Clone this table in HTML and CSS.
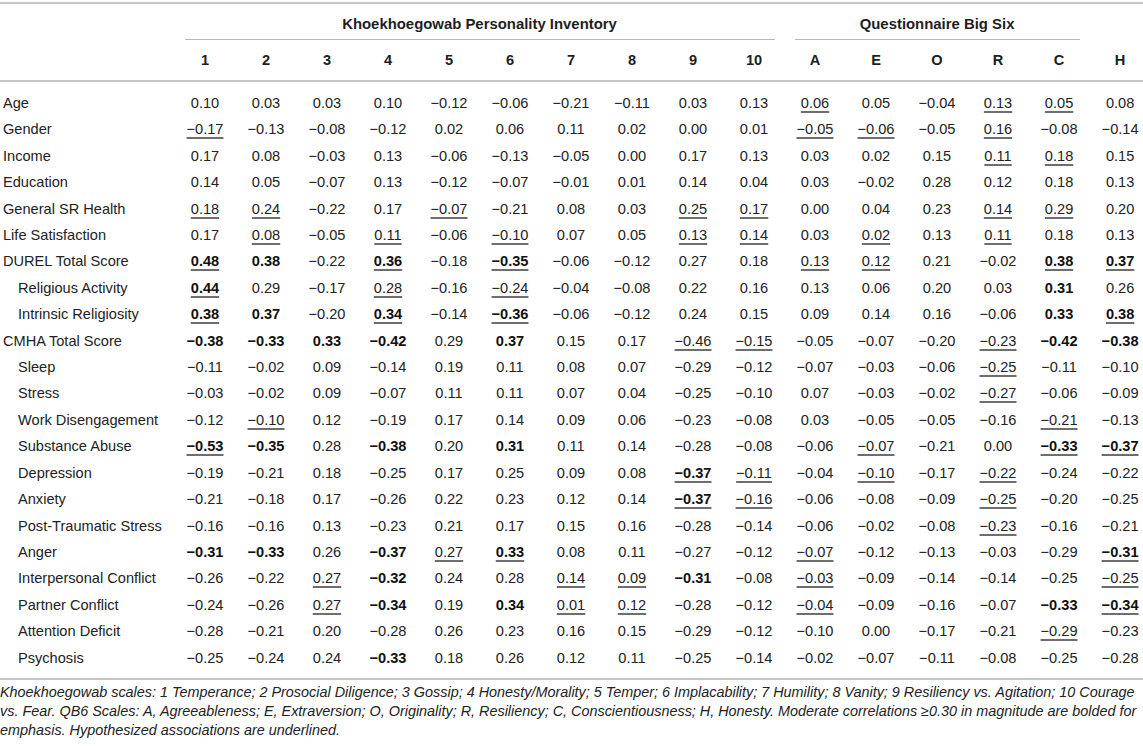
FILE: index.html
```html
<!DOCTYPE html>
<html lang="en">
<head>
<meta charset="utf-8">
<title>Correlations table</title>
<link rel="stylesheet" href="styles.css">
</head>
<body>
<div class="wrap">
<table class="corr">
<colgroup>
<col class="c-label">
<col class="c-num"><col class="c-num"><col class="c-num"><col class="c-num"><col class="c-num">
<col class="c-num"><col class="c-num"><col class="c-num"><col class="c-num"><col class="c-num">
<col class="c-num"><col class="c-num"><col class="c-num"><col class="c-num"><col class="c-num">
<col class="c-num">
</colgroup>
<thead>
<tr class="group-row">
<th></th>
<th colspan="10"><div class="grule">Khoekhoegowab Personality Inventory</div></th>
<th colspan="5"><div class="grule">Questionnaire Big Six</div></th>
<th></th>
</tr>
<tr class="col-row">
<th></th>
<th>1</th><th>2</th><th>3</th><th>4</th><th>5</th><th>6</th><th>7</th><th>8</th><th>9</th><th>10</th>
<th>A</th><th>E</th><th>O</th><th>R</th><th>C</th><th>H</th>
</tr>
</thead>
<tbody>
<tr><td class="lbl">Age</td><td>0.10</td><td>0.03</td><td>0.03</td><td>0.10</td><td>−0.12</td><td>−0.06</td><td>−0.21</td><td>−0.11</td><td>0.03</td><td>0.13</td><td class="u">0.06</td><td>0.05</td><td>−0.04</td><td class="u">0.13</td><td class="u">0.05</td><td>0.08</td></tr>
<tr><td class="lbl">Gender</td><td class="u">−0.17</td><td>−0.13</td><td>−0.08</td><td>−0.12</td><td>0.02</td><td>0.06</td><td>0.11</td><td>0.02</td><td>0.00</td><td>0.01</td><td class="u">−0.05</td><td class="u">−0.06</td><td>−0.05</td><td class="u">0.16</td><td>−0.08</td><td>−0.14</td></tr>
<tr><td class="lbl">Income</td><td>0.17</td><td>0.08</td><td>−0.03</td><td>0.13</td><td>−0.06</td><td>−0.13</td><td>−0.05</td><td>0.00</td><td>0.17</td><td>0.13</td><td>0.03</td><td>0.02</td><td>0.15</td><td class="u">0.11</td><td class="u">0.18</td><td>0.15</td></tr>
<tr><td class="lbl">Education</td><td>0.14</td><td>0.05</td><td>−0.07</td><td>0.13</td><td>−0.12</td><td>−0.07</td><td>−0.01</td><td>0.01</td><td>0.14</td><td>0.04</td><td>0.03</td><td>−0.02</td><td>0.28</td><td>0.12</td><td>0.18</td><td>0.13</td></tr>
<tr><td class="lbl">General SR Health</td><td class="u">0.18</td><td class="u">0.24</td><td>−0.22</td><td>0.17</td><td class="u">−0.07</td><td>−0.21</td><td>0.08</td><td>0.03</td><td class="u">0.25</td><td class="u">0.17</td><td>0.00</td><td>0.04</td><td>0.23</td><td class="u">0.14</td><td class="u">0.29</td><td>0.20</td></tr>
<tr><td class="lbl">Life Satisfaction</td><td>0.17</td><td class="u">0.08</td><td>−0.05</td><td class="u">0.11</td><td>−0.06</td><td class="u">−0.10</td><td>0.07</td><td>0.05</td><td class="u">0.13</td><td class="u">0.14</td><td>0.03</td><td class="u">0.02</td><td>0.13</td><td class="u">0.11</td><td>0.18</td><td>0.13</td></tr>
<tr><td class="lbl">DUREL Total Score</td><td class="b u">0.48</td><td class="b">0.38</td><td>−0.22</td><td class="b u">0.36</td><td>−0.18</td><td class="b u">−0.35</td><td>−0.06</td><td>−0.12</td><td>0.27</td><td>0.18</td><td class="u">0.13</td><td class="u">0.12</td><td>0.21</td><td>−0.02</td><td class="b u">0.38</td><td class="b u">0.37</td></tr>
<tr><td class="lbl ind">Religious Activity</td><td class="b u">0.44</td><td>0.29</td><td>−0.17</td><td class="u">0.28</td><td>−0.16</td><td class="u">−0.24</td><td>−0.04</td><td>−0.08</td><td>0.22</td><td>0.16</td><td>0.13</td><td>0.06</td><td>0.20</td><td>0.03</td><td class="b">0.31</td><td>0.26</td></tr>
<tr><td class="lbl ind">Intrinsic Religiosity</td><td class="b u">0.38</td><td class="b">0.37</td><td>−0.20</td><td class="b u">0.34</td><td>−0.14</td><td class="b u">−0.36</td><td>−0.06</td><td>−0.12</td><td>0.24</td><td>0.15</td><td>0.09</td><td>0.14</td><td>0.16</td><td>−0.06</td><td class="b">0.33</td><td class="b u">0.38</td></tr>
<tr><td class="lbl">CMHA Total Score</td><td class="b">−0.38</td><td class="b">−0.33</td><td class="b">0.33</td><td class="b">−0.42</td><td>0.29</td><td class="b">0.37</td><td>0.15</td><td>0.17</td><td class="u">−0.46</td><td class="u">−0.15</td><td>−0.05</td><td>−0.07</td><td>−0.20</td><td class="u">−0.23</td><td class="b">−0.42</td><td class="b">−0.38</td></tr>
<tr><td class="lbl ind">Sleep</td><td>−0.11</td><td>−0.02</td><td>0.09</td><td>−0.14</td><td>0.19</td><td>0.11</td><td>0.08</td><td>0.07</td><td>−0.29</td><td>−0.12</td><td>−0.07</td><td>−0.03</td><td>−0.06</td><td class="u">−0.25</td><td>−0.11</td><td>−0.10</td></tr>
<tr><td class="lbl ind">Stress</td><td>−0.03</td><td>−0.02</td><td>0.09</td><td>−0.07</td><td>0.11</td><td>0.11</td><td>0.07</td><td>0.04</td><td>−0.25</td><td>−0.10</td><td>0.07</td><td>−0.03</td><td>−0.02</td><td class="u">−0.27</td><td>−0.06</td><td>−0.09</td></tr>
<tr><td class="lbl ind">Work Disengagement</td><td>−0.12</td><td class="u">−0.10</td><td>0.12</td><td>−0.19</td><td>0.17</td><td>0.14</td><td>0.09</td><td>0.06</td><td>−0.23</td><td>−0.08</td><td>0.03</td><td>−0.05</td><td>−0.05</td><td>−0.16</td><td class="u">−0.21</td><td>−0.13</td></tr>
<tr><td class="lbl ind">Substance Abuse</td><td class="b u">−0.53</td><td class="b">−0.35</td><td>0.28</td><td class="b">−0.38</td><td>0.20</td><td class="b">0.31</td><td>0.11</td><td>0.14</td><td>−0.28</td><td>−0.08</td><td>−0.06</td><td class="u">−0.07</td><td>−0.21</td><td>0.00</td><td class="b u">−0.33</td><td class="b u">−0.37</td></tr>
<tr><td class="lbl ind">Depression</td><td>−0.19</td><td>−0.21</td><td>0.18</td><td>−0.25</td><td>0.17</td><td>0.25</td><td>0.09</td><td>0.08</td><td class="b u">−0.37</td><td class="u">−0.11</td><td>−0.04</td><td class="u">−0.10</td><td>−0.17</td><td class="u">−0.22</td><td>−0.24</td><td>−0.22</td></tr>
<tr><td class="lbl ind">Anxiety</td><td>−0.21</td><td>−0.18</td><td>0.17</td><td>−0.26</td><td>0.22</td><td>0.23</td><td>0.12</td><td>0.14</td><td class="b u">−0.37</td><td class="u">−0.16</td><td>−0.06</td><td>−0.08</td><td>−0.09</td><td class="u">−0.25</td><td>−0.20</td><td>−0.25</td></tr>
<tr><td class="lbl ind">Post-Traumatic Stress</td><td>−0.16</td><td>−0.16</td><td>0.13</td><td>−0.23</td><td>0.21</td><td>0.17</td><td>0.15</td><td>0.16</td><td>−0.28</td><td>−0.14</td><td>−0.06</td><td>−0.02</td><td>−0.08</td><td class="u">−0.23</td><td>−0.16</td><td>−0.21</td></tr>
<tr><td class="lbl ind">Anger</td><td class="b">−0.31</td><td class="b">−0.33</td><td>0.26</td><td class="b">−0.37</td><td class="u">0.27</td><td class="b u">0.33</td><td>0.08</td><td>0.11</td><td>−0.27</td><td>−0.12</td><td class="u">−0.07</td><td>−0.12</td><td>−0.13</td><td>−0.03</td><td>−0.29</td><td class="b u">−0.31</td></tr>
<tr><td class="lbl ind">Interpersonal Conflict</td><td>−0.26</td><td>−0.22</td><td class="u">0.27</td><td class="b">−0.32</td><td>0.24</td><td>0.28</td><td class="u">0.14</td><td class="u">0.09</td><td class="b">−0.31</td><td>−0.08</td><td class="u">−0.03</td><td>−0.09</td><td>−0.14</td><td>−0.14</td><td>−0.25</td><td class="u">−0.25</td></tr>
<tr><td class="lbl ind">Partner Conflict</td><td>−0.24</td><td>−0.26</td><td class="u">0.27</td><td class="b">−0.34</td><td>0.19</td><td class="b">0.34</td><td class="u">0.01</td><td class="u">0.12</td><td>−0.28</td><td>−0.12</td><td class="u">−0.04</td><td>−0.09</td><td>−0.16</td><td>−0.07</td><td class="b">−0.33</td><td class="b u">−0.34</td></tr>
<tr><td class="lbl ind">Attention Deficit</td><td>−0.28</td><td>−0.21</td><td>0.20</td><td>−0.28</td><td>0.26</td><td>0.23</td><td>0.16</td><td>0.15</td><td>−0.29</td><td>−0.12</td><td>−0.10</td><td>0.00</td><td>−0.17</td><td>−0.21</td><td class="u">−0.29</td><td>−0.23</td></tr>
<tr><td class="lbl ind">Psychosis</td><td>−0.25</td><td>−0.24</td><td>0.24</td><td class="b">−0.33</td><td>0.18</td><td>0.26</td><td>0.12</td><td>0.11</td><td>−0.25</td><td>−0.14</td><td>−0.02</td><td>−0.07</td><td>−0.11</td><td>−0.08</td><td>−0.25</td><td>−0.28</td></tr>
</tbody>
</table>
<p class="note">Khoekhoegowab scales: 1 Temperance; 2 Prosocial Diligence; 3 Gossip; 4 Honesty/Morality; 5 Temper; 6 Implacability; 7 Humility; 8 Vanity; 9 Resiliency vs. Agitation; 10 Courage vs. Fear. QB6 Scales: A, Agreeableness; E, Extraversion; O, Originality; R, Resiliency; C, Conscientiousness; H, Honesty. Moderate correlations ≥0.30 in magnitude are bolded for emphasis. Hypothesized associations are underlined.</p>
</div>
</body>
</html>
```

FILE: styles.css
```css
html, body {
  margin: 0;
  padding: 0;
  background: #ffffff;
  overflow: hidden;
}

body {
  font-family: "Liberation Sans", Arial, Helvetica, sans-serif;
  color: #222222;
}

.wrap {
  width: 1143px;
  overflow: hidden;
  padding-top: 2px;
}

.corr {
  border-collapse: separate;
  border-spacing: 0;
  table-layout: fixed;
  width: 1150.5px;
  font-size: 14.6px;
  border-top: 2px solid #c6c6c6;
}

.c-label { width: 174.5px; }
.c-num { width: 61px; }

.corr th {
  font-weight: bold;
  padding: 0;
  line-height: 20px;
  text-align: center;
  color: #1e1e1e;
}

.group-row th {
  padding-top: 10px;
  font-size: 14.9px;
}

.grule {
  margin: 0 10px;
  padding-bottom: 5px;
  border-bottom: 1px solid #b8b8b8;
}

.col-row th {
  padding: 10px 0 10px;
  border-bottom: 2px solid #c6c6c6;
}

.corr td {
  padding: 0;
  line-height: 26.4px;
  text-align: center;
  white-space: nowrap;
}

.corr td.lbl {
  text-align: left;
  padding-left: 3px;
}

.corr td.ind {
  padding-left: 18px;
}

.corr tbody tr:first-child td {
  padding-top: 8px;
}

.corr tbody tr:last-child td {
  padding-bottom: 7px;
  border-bottom: 2px solid #c6c6c6;
}

.corr td.b {
  font-weight: bold;
  color: #111111;
}

.corr td.u {
  text-decoration: underline;
  text-decoration-color: #6e6e6e;
  text-decoration-thickness: 1.5px;
  text-underline-offset: 3px;
}

.note {
  margin: 3px 0 0;
  width: 1143px;
  font-style: italic;
  font-size: 14.4px;
  line-height: 19px;
  color: #222222;
}
```
